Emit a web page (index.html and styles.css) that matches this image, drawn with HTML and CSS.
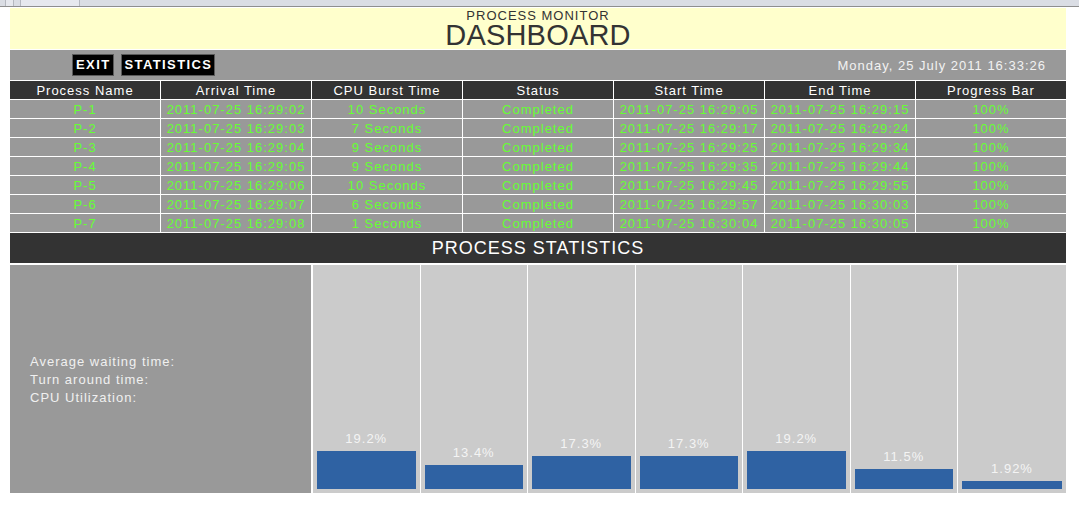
FILE: index.html
```html
<!DOCTYPE html>
<html lang="en">
<head>
<meta charset="utf-8">
<title>Process Monitor Dashboard</title>
<link rel="stylesheet" href="styles.css">
</head>
<body>
<div class="chrome"><span class="tab tab-a"></span><span class="tab tab-b"></span></div>
<div class="dash">
  <header class="title">
    <div class="sub">PROCESS MONITOR</div>
    <h1 class="main">DASHBOARD</h1>
  </header>
  <nav class="toolbar">
    <div class="btns"><a class="btn">EXIT</a><a class="btn">STATISTICS</a></div>
    <div class="date">Monday, 25 July 2011 16:33:26</div>
  </nav>
  <div class="table">
    <div class="row head"><div>Process Name</div><div>Arrival Time</div><div>CPU Burst Time</div><div>Status</div><div>Start Time</div><div>End Time</div><div>Progress Bar</div></div>
    <div class="row"><div>P-1</div><div>2011-07-25 16:29:02</div><div>10 Seconds</div><div>Completed</div><div>2011-07-25 16:29:05</div><div>2011-07-25 16:29:15</div><div>100%</div></div>
    <div class="row"><div>P-2</div><div>2011-07-25 16:29:03</div><div>7 Seconds</div><div>Completed</div><div>2011-07-25 16:29:17</div><div>2011-07-25 16:29:24</div><div>100%</div></div>
    <div class="row"><div>P-3</div><div>2011-07-25 16:29:04</div><div>9 Seconds</div><div>Completed</div><div>2011-07-25 16:29:25</div><div>2011-07-25 16:29:34</div><div>100%</div></div>
    <div class="row"><div>P-4</div><div>2011-07-25 16:29:05</div><div>9 Seconds</div><div>Completed</div><div>2011-07-25 16:29:35</div><div>2011-07-25 16:29:44</div><div>100%</div></div>
    <div class="row"><div>P-5</div><div>2011-07-25 16:29:06</div><div>10 Seconds</div><div>Completed</div><div>2011-07-25 16:29:45</div><div>2011-07-25 16:29:55</div><div>100%</div></div>
    <div class="row"><div>P-6</div><div>2011-07-25 16:29:07</div><div>6 Seconds</div><div>Completed</div><div>2011-07-25 16:29:57</div><div>2011-07-25 16:30:03</div><div>100%</div></div>
    <div class="row"><div>P-7</div><div>2011-07-25 16:29:08</div><div>1 Seconds</div><div>Completed</div><div>2011-07-25 16:30:04</div><div>2011-07-25 16:30:05</div><div>100%</div></div>
  </div>
  <div class="stats-title">PROCESS STATISTICS</div>
  <div class="stats">
    <div class="summary">
      <div>Average waiting time:</div>
      <div>Turn around time:</div>
      <div>CPU Utilization:</div>
    </div>
    <div class="chart">
      <div class="col"><span class="pct">19.2%</span><div class="bar" style="height:38px"></div></div>
      <div class="col"><span class="pct">13.4%</span><div class="bar" style="height:24px"></div></div>
      <div class="col"><span class="pct">17.3%</span><div class="bar" style="height:33px"></div></div>
      <div class="col"><span class="pct">17.3%</span><div class="bar" style="height:33px"></div></div>
      <div class="col"><span class="pct">19.2%</span><div class="bar" style="height:38px"></div></div>
      <div class="col"><span class="pct">11.5%</span><div class="bar" style="height:20px"></div></div>
      <div class="col"><span class="pct">1.92%</span><div class="bar" style="height:8px"></div></div>
    </div>
  </div>
</div>
</body>
</html>
```

FILE: styles.css
```css
* { box-sizing: border-box; }
html, body { margin: 0; padding: 0; background: #fff; }
body {
  font-family: "Liberation Sans", Arial, sans-serif;
  font-size: 13px;
  color: #333;
}

.chrome {
  height: 7px;
  background: #dadde4;
  border-bottom: 1px solid #8e8e8e;
  display: flex;
  gap: 6px;
  padding-left: 5px;
}
.tab { display: block; height: 6px; border-left: 1px solid #b5b8c0; border-right: 1px solid #b5b8c0; background: #e6e8ee; }
.tab-a { width: 9px; }
.tab-b { width: 60px; }

.dash {
  margin: 1px 13px 0 10px;
  display: flex;
  flex-direction: column;
  gap: 1px;
  background: #fff;
}

.title {
  height: 41px;
  background: #ffffcc;
  text-align: center;
  padding-top: 1px;
  color: #333;
}
.title .sub { font-size: 13px; line-height: 14px; letter-spacing: 1px; }
.title .main { margin: 0; font-size: 29px; font-weight: normal; line-height: 25px; letter-spacing: 0.2px; }

.toolbar {
  height: 30px;
  background: #999;
  display: flex;
  align-items: center;
  justify-content: space-between;
  padding: 0 20px 0 62px;
}
.btns { display: flex; gap: 7px; }
.btn {
  display: block;
  background: #000;
  border: 1px solid #5a5a5a;
  color: #fff;
  font-weight: bold;
  font-size: 13px;
  letter-spacing: 1.4px;
  line-height: 20px;
  padding: 0 2px 0 3px;
}
.date { color: #f2f2f2; letter-spacing: 1px; font-size: 13px; }

.table { display: flex; flex-direction: column; gap: 1px; }
.row {
  display: grid;
  grid-template-columns: repeat(7, 1fr);
  gap: 1px;
}
.row > div {
  height: 18px;
  line-height: 17px;
  padding-top: 1px;
  text-align: center;
  background: #999;
  color: #66ff33;
  letter-spacing: 1px;
  white-space: nowrap;
}
.row.head > div { background: #333; color: #fff; }

.stats-title {
  height: 30px;
  background: #333;
  color: #fff;
  text-align: center;
  font-size: 18px;
  line-height: 29px;
  padding-top: 1px;
  letter-spacing: 1px;
}

.stats {
  margin-top: 1px;
  height: 228px;
  display: flex;
  gap: 2px;
}
.summary {
  width: 301px;
  background: #999;
  color: #f0f0f0;
  letter-spacing: 1px;
  line-height: 18px;
  padding: 2px 0 0 20px;
  display: flex;
  flex-direction: column;
  justify-content: center;
}
.chart {
  flex: 1;
  display: grid;
  grid-template-columns: repeat(6, 106.5px) 1fr;
  gap: 1px;
}
.col {
  background: #cbcbcb;
  display: flex;
  flex-direction: column;
  justify-content: flex-end;
  align-items: stretch;
  padding: 0 4px 4px;
}
.pct {
  display: block;
  text-align: center;
  color: #f4f4f4;
  letter-spacing: 1px;
  line-height: 16px;
  margin-bottom: 4px;
}
.bar { background: #2f62a3; }
```
